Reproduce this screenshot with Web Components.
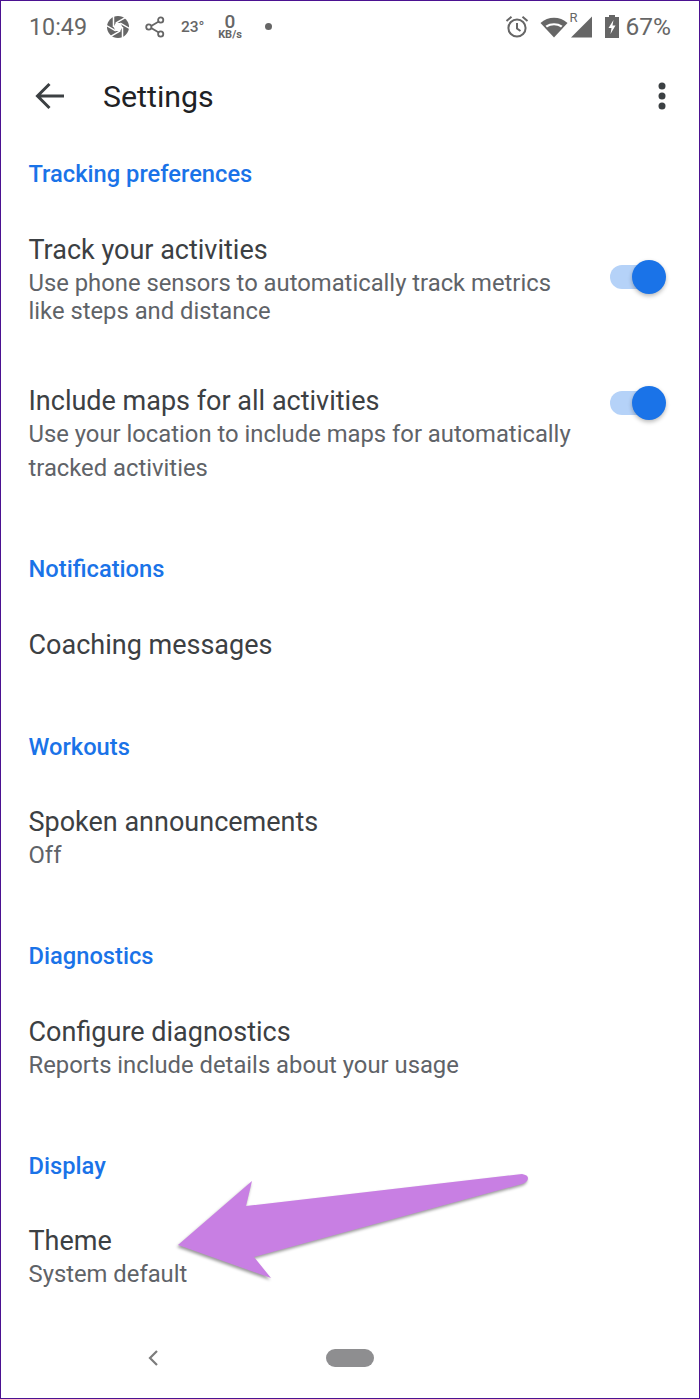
<!DOCTYPE html>
<html>
<head>
<meta charset="utf-8">
<style>
html, body { margin: 0; background: #fff; }
body { font-family: Roboto, "Liberation Sans", sans-serif; }
</style>
</head>
<body>
<settings-page>
    <status-bar></status-bar>
    <app-bar title="Settings"></app-bar>
    <section-header style="--top:17px">Tracking preferences</section-header>
    <setting-row>
        Track your activities
        <span slot="sub">Use phone sensors to automatically track metrics</span>
        <span slot="sub">like steps and distance</span>
        <toggle-switch slot="end" style="--toggle-top:31px"></toggle-switch>
    </setting-row>
    <setting-row style="--top:55px;--line-gap:6px">
        Include maps for all activities
        <span slot="sub">Use your location to include maps for automatically</span>
        <span slot="sub">tracked activities</span>
        <toggle-switch slot="end" style="--toggle-top:6px"></toggle-switch>
    </setting-row>
    <section-header>Notifications</section-header>
    <setting-row>Coaching messages</setting-row>
    <section-header style="--top:66px">Workouts</section-header>
    <setting-row style="--top:37px">
        Spoken announcements
        <span slot="sub">Off</span>
    </setting-row>
    <section-header>Diagnostics</section-header>
    <setting-row>
        Configure diagnostics
        <span slot="sub">Reports include details about your usage</span>
    </setting-row>
    <section-header>Display</section-header>
    <setting-row style="--top:37px">
        Theme
        <span slot="sub">System default</span>
    </setting-row>
    <nav-bar></nav-bar>
    <callout-arrow></callout-arrow>
</settings-page>

<script>
class SettingsPage extends HTMLElement {
    constructor() {
        super();
        this.attachShadow({mode: 'open'});
        this.shadowRoot.innerHTML = `
<style>
:host {
    display: flex;
    flex-direction: column;
    position: relative;
    box-sizing: border-box;
    width: 700px;
    height: 1399px;
    border: 1px solid #4b1291;
    overflow: hidden;
}
</style>
<slot></slot>`;
    }
}

class StatusBar extends HTMLElement {
    constructor() {
        super();
        this.attachShadow({mode: 'open'});
        this.shadowRoot.innerHTML = `
<style>
:host {
    display: flex;
    align-items: center;
    height: 51px;
    padding: 0 28px;
    box-sizing: border-box;
    color: #666;
    flex: none;
}
svg { display: block; flex: none; }
.time { font-size: 23.3px; width: 77px; }
.temp { font-size: 15.5px; font-weight: 500; margin-left: 16px; width: 35px; }
.speed { display: flex; flex-direction: column; align-items: center; width: 28px; }
.speed b { font-size: 19px; line-height: 17px; font-weight: 500; }
.speed i { font-size: 11px; line-height: 10px; font-style: normal; font-weight: 700; }
.dot { width: 7px; height: 7px; border-radius: 50%; background: #666; margin-left: 21px; }
.right { margin-left: auto; display: flex; align-items: center; }
.r { font-size: 13px; align-self: flex-start; margin: -2px 0 0 2px; width: 0; }
.pct { font-size: 24.5px; margin-left: 7px; }
</style>
<span class="time">10:49</span>
<svg width="24" height="24" viewBox="0 0 24 24" fill="#666">
    <circle cx="12" cy="12" r="11"/>
    <path fill="#fff" d="M16.5 12 L14.25 15.9 L9.75 15.9 L7.5 12 L9.75 8.1 L14.25 8.1 Z"/>
    <path stroke="#fff" stroke-width="1.5" fill="none" d="M16.5 12 V24 M14.25 15.9 L3.9 21.9 M9.75 15.9 L-0.6 9.9 M7.5 12 V0 M9.75 8.1 L20.1 2.1 M14.25 8.1 L24.6 14.1"/>
</svg>
<svg style="margin-left:15px" width="20" height="22" viewBox="0 0 20 22" fill="none" stroke="#666" stroke-width="1.8">
    <path d="M15.5 4.5 L4.5 11 L15.5 17.5"/>
    <circle cx="15.7" cy="4" r="2.6" fill="#fff"/>
    <circle cx="3.8" cy="11" r="2.6" fill="#fff"/>
    <circle cx="15.7" cy="18" r="2.6" fill="#fff"/>
</svg>
<span class="temp">23°</span>
<span class="speed"><b>0</b><i>KB/s</i></span>
<span class="dot"></span>
<span class="right">
    <svg width="26" height="26" viewBox="0 0 26 26" fill="none" stroke="#666" stroke-width="2">
        <circle cx="13" cy="14" r="8.6"/>
        <path d="M13 9 V14.5 L16.5 17"/>
        <path d="M2.5 7 L7.5 2.8 M23.5 7 L18.5 2.8"/>
    </svg>
    <svg style="margin-left:10px" width="28" height="22" viewBox="0 0 28 22" fill="#666">
        <path d="M14 21.5 L0.5 7 C8 0 20 0 27.5 7 Z"/>
        <path d="M5.5 9.8 C10.5 6.5 17.5 6.5 22.5 9.8 L21 11.4 C16.5 8.6 11.5 8.6 7 11.4 Z" fill="#fff"/>
    </svg>
    <span class="r">R</span>
    <svg style="margin-left:1px" width="21" height="22" viewBox="0 0 21 22" fill="#666">
        <path d="M21 0.5 V21.5 H0 Z"/>
    </svg>
    <svg style="margin-left:13px" width="14" height="23" viewBox="0 0 14 23" fill="#666">
        <path d="M4 0 H10 V2 H14 V23 H0 V2 H4 Z"/>
        <path d="M8.5 5 L3.5 13 H6.5 L5.5 19 L10.5 10.5 H7.5 Z" fill="#fff"/>
    </svg>
    <span class="pct">67%</span>
</span>`;
    }
}

class AppBar extends HTMLElement {
    constructor() {
        super();
        this.attachShadow({mode: 'open'});
        this.shadowRoot.innerHTML = `
<style>
:host {
    display: flex;
    align-items: center;
    height: 88px;
    flex: none;
    padding: 0 33px 0 34px;
    color: #202124;
}
svg { display: block; flex: none; }
.title { font-size: 30.3px; margin-left: 38px; flex: 1; }
</style>
<svg width="30" height="28" viewBox="0 0 30 28" fill="none" stroke="#3c4043" stroke-width="3">
    <path d="M29 14 H3 M14.5 2 L2.5 14 L14.5 26"/>
</svg>
<span class="title"></span>
<svg width="8" height="28" viewBox="0 0 8 28" fill="#3c4043">
    <circle cx="4" cy="4" r="3.5"/>
    <circle cx="4" cy="14" r="3.5"/>
    <circle cx="4" cy="24" r="3.5"/>
</svg>`;
    }

    connectedCallback() {
        this.shadowRoot.querySelector('.title').textContent = this.getAttribute('title');
    }
}

class SectionHeader extends HTMLElement {
    constructor() {
        super();
        this.attachShadow({mode: 'open'});
        this.shadowRoot.innerHTML = `
<style>
:host {
    display: block;
    flex: none;
    margin-top: var(--top, 70px);
    padding-left: 27.5px;
    font-size: 23.7px;
    font-weight: 500;
    line-height: 34px;
    color: #1a73e8;
}
</style>
<slot></slot>`;
    }
}

class SettingRow extends HTMLElement {
    constructor() {
        super();
        this.attachShadow({mode: 'open'});
        this.shadowRoot.innerHTML = `
<style>
:host {
    display: flex;
    flex: none;
    margin-top: var(--top, 38px);
    padding: 0 33px 0 27.5px;
    position: relative;
}
.text { flex: 1; }
.title { font-size: 27px; line-height: 40px; padding-top: 1px; margin-bottom: -1px; color: #3c4043; }
.sub {
    display: flex;
    flex-direction: column;
    gap: var(--line-gap, 0);
    font-size: 23.8px;
    line-height: 28px;
    color: #5f6368;
}
</style>
<div class="text">
    <div class="title"><slot></slot></div>
    <div class="sub"><slot name="sub"></slot></div>
</div>
<slot name="end"></slot>`;
    }
}

class ToggleSwitch extends HTMLElement {
    constructor() {
        super();
        this.attachShadow({mode: 'open'});
        this.shadowRoot.innerHTML = `
<style>
:host {
    display: block;
    position: relative;
    flex: none;
    width: 56px;
    height: 34px;
    margin-top: var(--toggle-top, 0);
}
.track {
    width: 47px;
    height: 24px;
    margin-top: 5px;
    border-radius: 12px;
    background: #b5d2f8;
}
.thumb {
    position: absolute;
    right: 0;
    top: 0;
    width: 34px;
    height: 34px;
    border-radius: 50%;
    background: #1a73e8;
    box-shadow: 0 2px 4px rgba(0,0,0,.28);
}
</style>
<div class="track"></div>
<div class="thumb"></div>`;
    }
}

class NavBar extends HTMLElement {
    constructor() {
        super();
        this.attachShadow({mode: 'open'});
        this.shadowRoot.innerHTML = `
<style>
:host {
    display: flex;
    align-items: center;
    flex: none;
    height: 40px;
    margin-top: auto;
    margin-bottom: 20px;
    padding-left: 145px;
}
svg { display: block; }
.pill {
    width: 48px;
    height: 18px;
    border-radius: 9px;
    background: #8e8e90;
    margin-left: 166px;
}
</style>
<svg width="14" height="18" viewBox="0 0 14 18" fill="none" stroke="#7c7c7c" stroke-width="2.2">
    <path d="M11 2 L4 9 L11 16"/>
</svg>
<span class="pill"></span>`;
    }
}

class CalloutArrow extends HTMLElement {
    constructor() {
        super();
        this.attachShadow({mode: 'open'});
        this.shadowRoot.innerHTML = `
<style>
:host { position: absolute; left: -1px; top: -1px; pointer-events: none; }
svg { display: block; }
</style>
<svg width="700" height="1399" viewBox="0 0 700 1399" style="filter:drop-shadow(-1px 2px 1.5px rgba(0,0,0,.4))">
    <path fill="#c87fe3" d="M178 1245 L252 1181 L246 1206 L522 1174 Q528 1175 528 1178 Q528 1182 522 1184 L254 1257 L271 1278 Z"/>
</svg>`;
    }
}

window.customElements.define('settings-page', SettingsPage);
window.customElements.define('status-bar', StatusBar);
window.customElements.define('app-bar', AppBar);
window.customElements.define('section-header', SectionHeader);
window.customElements.define('setting-row', SettingRow);
window.customElements.define('toggle-switch', ToggleSwitch);
window.customElements.define('nav-bar', NavBar);
window.customElements.define('callout-arrow', CalloutArrow);
</script>
</body>
</html>
